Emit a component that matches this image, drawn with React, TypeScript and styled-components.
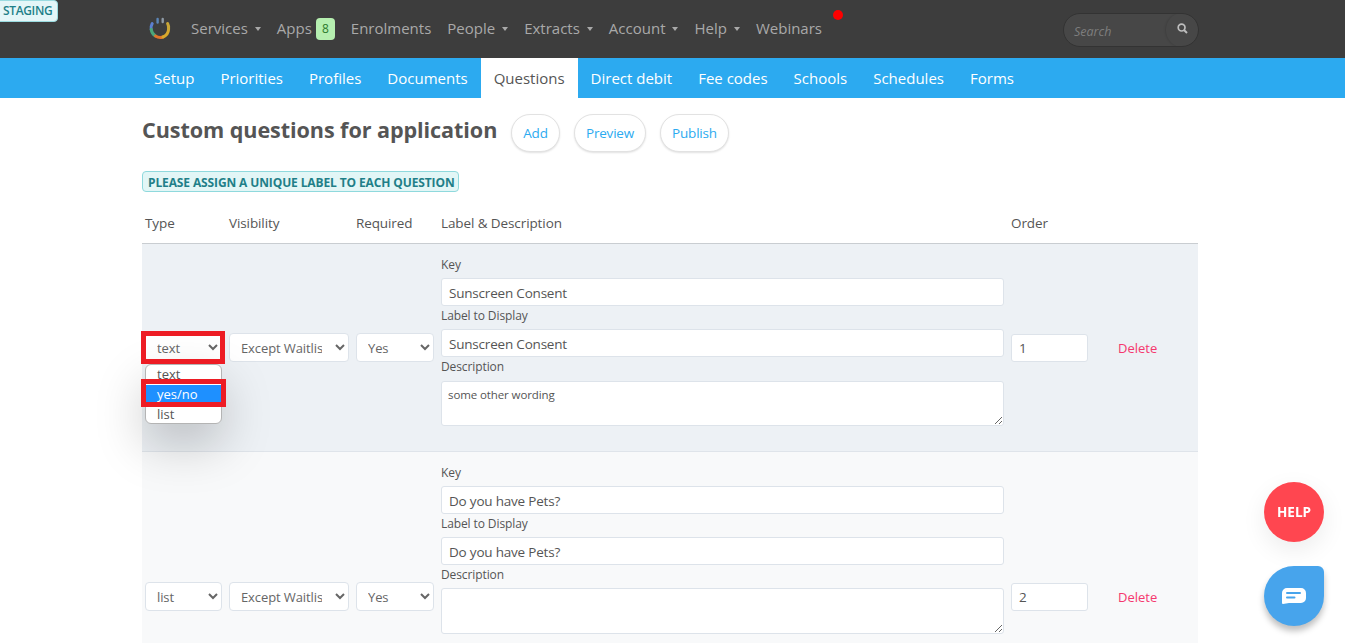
import React from 'react';
import styled, { createGlobalStyle } from 'styled-components';

const FONT = `"Open Sans", "Noto Sans", "Liberation Sans", sans-serif`;

const Global = createGlobalStyle`
  html, body { margin: 0; padding: 0; height: 643px; overflow: hidden; background: #fff; }
  body { font-family: ${FONT}; color: #555; }
  #root { height: 643px; overflow: hidden; }
  * { box-sizing: border-box; }
`;

const Staging = styled.div`
  position: absolute; left: -4px; top: 0; height: 22px; width: 62px;
  background: #e4f6f8; border: 1px solid #9adbe0; border-radius: 4px;
  color: #1f7f88; font-size: 12px; font-weight: 600; line-height: 20px; padding-left: 6px;
  letter-spacing: -0.35px;
`;
const TopBar = styled.header`
  height: 58px; background: #3d3d3d; display: flex; align-items: flex-start;
  padding-left: 149px; position: relative;
`;
const LogoWrap = styled.div`
  width: 22px; height: 24px; margin-top: 16px; margin-right: 20px; flex: none;
`;
const MainNav = styled.nav`
  display: flex; align-items: center; height: 55px; gap: 16px; flex: none;
`;
const NavItem = styled.span`
  display: inline-flex; align-items: center; color: #a9a9a9; font-size: 15px;
  white-space: nowrap; height: 20px;
`;
const Caret = styled.i`
  display: inline-block; width: 0; height: 0; margin-left: 7px; margin-top: 3px;
  border-left: 3.5px solid transparent; border-right: 3.5px solid transparent; border-top: 4.5px solid #a9a9a9;
`;
const Count = styled.b`
  display: inline-block; width: 19px; height: 22px; margin-left: 4px; margin-top: 3px; border-radius: 4px;
  background: #b6efb0; color: #2b7a2b; font-size: 12px; font-weight: 400; text-align: center; line-height: 22px;
`;
const Dot = styled.i`
  position: absolute; left: 833px; top: 10px; width: 10px; height: 10px; border-radius: 50%; background: #fd0000;
`;
const Search = styled.div`
  position: absolute; left: 1063px; top: 13px; width: 136px; height: 34px; border-radius: 17px;
  background: #474747; border: 1px solid #333; display: flex; align-items: center; justify-content: space-between;
  padding: 2px 0 0 10px; color: #7e7e7e; font-size: 12.5px; font-style: italic; overflow: hidden;
`;
const SearchBtn = styled.span`
  width: 32px; height: 34px; margin-top: -2px; border-radius: 50%; display: flex; align-items: center; justify-content: center;
  box-shadow: -1px 0 2px rgba(0,0,0,.12); padding: 0 0 3px 1px;
`;
const SubBar = styled.nav`
  height: 40px; background: #2caaf0; display: flex; padding-left: 141px;
`;
const SubItem = styled.span<{ $active?: boolean }>`
  height: 40px; line-height: 41px; padding: 0 13px; font-size: 15px; white-space: nowrap;
  color: ${p => (p.$active ? '#555' : '#fff')};
  background: ${p => (p.$active ? '#fff' : 'transparent')};
`;
const Main = styled.main`
  margin-left: 142px; width: 1056px;
`;
const TitleRow = styled.div`
  height: 73px; display: flex; align-items: flex-start; padding-top: 16px;
`;
const Title = styled.h1`
  margin: 0 14px 0 0; font-size: 21.6px; line-height: 32px; font-weight: 700; color: #555; letter-spacing: -0.08px; white-space: nowrap; width: 355px;
`;
const Pill = styled.button<{ $w: number }>`
  width: ${p => p.$w}px; height: 38px; border-radius: 19px; margin-right: 14px; background: #fff;
  border: 1px solid #e2e2e2; box-shadow: 0 1px 2px rgba(0,0,0,.12); color: #2caaf0;
  font: 400 13.5px ${FONT}; padding: 0; letter-spacing: -0.2px;
`;
const Notice = styled.div`
  width: 317px; height: 21px; background: #e2f6f6; border: 1px solid #8fd9dd; border-radius: 4px;
  color: #1f7f88; font-size: 12px; font-weight: 700; line-height: 21px; padding-left: 5px; white-space: nowrap; letter-spacing: -0.12px;
`;
const cols = `77px 120px 78px 563px 77px auto`;
const HeadRow = styled.div`
  display: grid; grid-template-columns: ${cols}; column-gap: 7px; padding-left: 3px;
  margin-top: 11px; height: 41px; align-items: center; border-bottom: 1px solid #c9cdd1;
  font-size: 13.5px; font-weight: 500; color: #555; letter-spacing: -0.1px; padding-bottom: 1px;
`;
const Row = styled.div<{ $alt?: boolean; $h: number }>`
  display: grid; grid-template-columns: ${cols}; column-gap: 7px; padding-left: 3px;
  height: ${p => p.$h}px; align-items: center; border-bottom: 1px solid #dfe4ea;
  background: ${p => (p.$alt ? '#f8f9fa' : '#edf1f5')};
`;
const SelectCell = styled.div`
  position: relative; width: 100%;
`;
const Select = styled.select`
  display: block; width: 100%; height: 29px; border: 1px solid #dde3ea; border-radius: 4px; background-color: #fff;
  color: #666; font: 400 13px ${FONT}; padding: 0 10px 0 7px; letter-spacing: -0.1px; outline: none;
`;
const Popup = styled.div`
  position: absolute; left: 0; top: 31px; width: 77px; height: 60px; background: #fff; z-index: 3;
  border: 1px solid #b4b4b4; border-radius: 6px; overflow: hidden; box-shadow: 0 20px 50px rgba(0,0,0,.22);
`;
const PopOption = styled.div<{ $on?: boolean }>`
  height: 20px; line-height: 18px; padding-left: 11px; font-size: 13px;
  color: ${p => (p.$on ? '#fff' : '#555')}; background: ${p => (p.$on ? '#1e90ff' : 'transparent')};
`;
const Marker = styled.div<{ $top: number; $w: number; $h: number }>`
  position: absolute; left: -4px; top: ${p => p.$top}px; width: ${p => p.$w}px; height: ${p => p.$h}px;
  border: 5px solid #ed1c24; z-index: 4; pointer-events: none;
`;
const Fields = styled.div`
  display: flex; flex-direction: column; align-self: start; padding-top: 11px;
`;
const FieldLabel = styled.label<{ $h?: number }>`
  font-size: 12px; line-height: 16px; font-weight: 500; color: #555; height: ${p => p.$h ?? 23}px; padding-top: 2px; display: block; letter-spacing: -0.1px;
`;
const TextField = styled.input`
  display: block; width: 100%; height: 28px; border: 1px solid #dde3ea; border-radius: 3px; background: #fff; color: #555;
  font: 400 13.5px ${FONT}; padding: 1px 7px 0; outline: none; letter-spacing: -0.2px;
`;
const TextArea = styled.textarea<{ $h: number }>`
  display: block; width: 100%; height: ${p => p.$h}px; border: 1px solid #dde3ea; border-radius: 3px; background: #fff; color: #555;
  font: 400 11.5px/16px ${FONT}; padding: 5px 6px; outline: none; margin: 0; letter-spacing: -0.1px;
`;
const Order = styled(TextField)`
  height: 28px;
`;
const DeleteLink = styled.span`
  margin-left: 23px; color: #f5386e; font-size: 13px;
`;
const FloatHelp = styled.div`
  position: fixed; left: 1264px; top: 482px; width: 60px; height: 60px; border-radius: 50%; background: #ff4650;
  color: #fff; font-size: 13.5px; font-weight: 700; text-align: center; line-height: 60px;
  box-shadow: 0 8px 24px rgba(0,0,0,.08);
`;
const FloatChat = styled.div`
  position: fixed; left: 1264px; top: 566px; width: 60px; height: 60px; border-radius: 50% 6px 50% 50%; background: #47a4ec;
  display: flex; align-items: center; justify-content: center;
  box-shadow: 0 5px 6px rgba(0,0,0,.25);
`;

const Logo = () => (
  <svg width="22" height="24" viewBox="0 0 22 24" fill="none" strokeWidth="3" strokeLinecap="round">
    <path d="M3.2 7.5 A9 9 0 0 0 2.2 13.5" stroke="#5b7fd0" />
    <path d="M2.2 13.5 A9 9 0 0 0 6.5 20" stroke="#4aa67a" />
    <path d="M6.5 20 A9 9 0 0 0 14 21" stroke="#e0752a" />
    <path d="M14 21 A9 9 0 0 0 19.6 13" stroke="#d8a82c" />
    <path d="M19.6 13 A9 9 0 0 0 18.6 7.5" stroke="#c9a637" />
    <path d="M8.6 3 V6.5" stroke="#5b86b8" strokeWidth="2.4" />
    <path d="M13.7 3 V6" stroke="#8e9aa6" strokeWidth="2.4" />
  </svg>
);

const SearchIcon = () => (
  <svg width="11" height="11" viewBox="0 0 11 11" fill="none" stroke="#bdbdbd" strokeWidth="1.7">
    <circle cx="4.6" cy="4.6" r="3.4" />
    <path d="M7 7 L10 10" strokeWidth="2" />
  </svg>
);

const ChatIcon = () => (
  <svg width="24" height="16" viewBox="0 0 24 16">
    <path d="M5 0 H19 A5 5 0 0 1 24 5 V10 A5 5 0 0 1 19 15 H7 L1 16 A1 1 0 0 1 0 15 V5 A5 5 0 0 1 5 0 Z" fill="#fff" />
    <rect x="4" y="4" width="15" height="2" rx="1" fill="#47a4ec" />
    <rect x="4" y="8.5" width="9.5" height="2" rx="1" fill="#47a4ec" />
  </svg>
);

type Q = { type: string; key: string; label: string; desc: string; order: string; areaH: number; h: number; descGap: number };
const questions: Q[] = [
  { type: 'text', key: 'Sunscreen Consent', label: 'Sunscreen Consent', desc: 'some other wording', order: '1', areaH: 45, h: 208, descGap: 24 },
  { type: 'list', key: 'Do you have Pets?', label: 'Do you have Pets?', desc: '', order: '2', areaH: 46, h: 290, descGap: 23 },
];

const QuestionRow = ({ q, open, alt }: { q: Q; open?: boolean; alt?: boolean }) => (
  <Row $alt={alt} $h={q.h}>
    <SelectCell>
      <Select value={q.type} onChange={() => {}}>
        <option value="text">text</option>
        <option value="yes/no">yes/no</option>
        <option value="list">list</option>
      </Select>
      {open && (
        <>
          <Popup>
            <PopOption>text</PopOption>
            <PopOption $on>yes/no</PopOption>
            <PopOption>list</PopOption>
          </Popup>
          <Marker $top={-2} $w={84} $h={33} />
          <Marker $top={46} $w={85} $h={28} />
        </>
      )}
    </SelectCell>
    <Select value="w" onChange={() => {}}>
      <option value="w">Except Waitlist</option>
    </Select>
    <Select value="y" onChange={() => {}}>
      <option value="y">Yes</option>
      <option value="n">No</option>
    </Select>
    <Fields>
      <FieldLabel>Key</FieldLabel>
      <TextField readOnly value={q.key} />
      <FieldLabel>Label to Display</FieldLabel>
      <TextField readOnly value={q.label} />
      <FieldLabel $h={q.descGap}>Description</FieldLabel>
      <TextArea readOnly value={q.desc} $h={q.areaH} />
    </Fields>
    <Order readOnly value={q.order} />
    <DeleteLink>Delete</DeleteLink>
  </Row>
);

const topItems: { t: string; caret?: boolean; count?: string }[] = [
  { t: 'Services', caret: true },
  { t: 'Apps', count: '8' },
  { t: 'Enrolments' },
  { t: 'People', caret: true },
  { t: 'Extracts', caret: true },
  { t: 'Account', caret: true },
  { t: 'Help', caret: true },
  { t: 'Webinars' },
];
const subItems = ['Setup', 'Priorities', 'Profiles', 'Documents', 'Questions', 'Direct debit', 'Fee codes', 'Schools', 'Schedules', 'Forms'];

export default function App() {
  return (
    <>
      <Global />
      <TopBar>
        <LogoWrap><Logo /></LogoWrap>
        <MainNav>
          {topItems.map(i => (
            <NavItem key={i.t}>
              {i.t}
              {i.caret && <Caret />}
              {i.count && <Count>{i.count}</Count>}
            </NavItem>
          ))}
        </MainNav>
        <Dot />
        <Search>Search<SearchBtn><SearchIcon /></SearchBtn></Search>
      </TopBar>
      <Staging>STAGING</Staging>
      <SubBar>
        {subItems.map(s => <SubItem key={s} $active={s === 'Questions'}>{s}</SubItem>)}
      </SubBar>
      <Main>
        <TitleRow>
          <Title>Custom questions for application</Title>
          <Pill $w={49}>Add</Pill>
          <Pill $w={72}>Preview</Pill>
          <Pill $w={69}>Publish</Pill>
        </TitleRow>
        <Notice>PLEASE ASSIGN A UNIQUE LABEL TO EACH QUESTION</Notice>
        <HeadRow>
          <span>Type</span>
          <span>Visibility</span>
          <span>Required</span>
          <span>Label &amp; Description</span>
          <span>Order</span>
        </HeadRow>
        {questions.map((q, i) => <QuestionRow key={q.order} q={q} open={i === 0} alt={i === 1} />)}
      </Main>
      <FloatHelp>HELP</FloatHelp>
      <FloatChat><ChatIcon /></FloatChat>
    </>
  );
}
